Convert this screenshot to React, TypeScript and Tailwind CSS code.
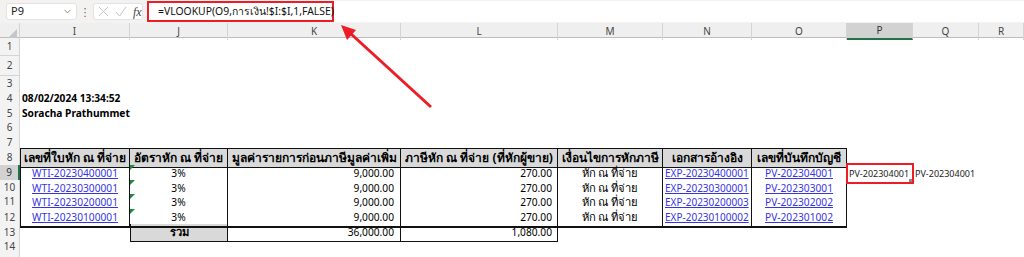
import { ChevronDown } from "lucide-react";

const GRID = "grid grid-cols-[20px_110px_98px_173px_157px_105px_89px_95px_66px_66px_1fr]";

const ROW_HEIGHTS: Record<number, string> = {
  1: "h-[18px]",
  2: "h-[20px]",
  3: "h-[15px]",
  4: "h-[15px]",
  5: "h-[14px]",
  6: "h-[15px]",
  7: "h-[13px]",
  8: "h-[17px]",
  9: "h-[15px]",
  10: "h-[14px]",
  11: "h-[15px]",
  12: "h-[15px]",
  13: "h-[15px]",
  14: "h-[15px]",
};

const rows = [
  { wti: "WTI-20230400001", exp: "EXP-20230400001", pv: "PV-202304001" },
  { wti: "WTI-20230300001", exp: "EXP-20230300001", pv: "PV-202303001" },
  { wti: "WTI-20230200001", exp: "EXP-20230200003", pv: "PV-202302002" },
  { wti: "WTI-20230100001", exp: "EXP-20230100002", pv: "PV-202301002" },
];

const headers = [
  "เลขที่ใบหัก ณ ที่จ่าย",
  "อัตราหัก ณ ที่จ่าย",
  "มูลค่ารายการก่อนภาษีมูลค่าเพิ่ม",
  "ภาษีหัก ณ ที่จ่าย (ที่หักผู้ขาย)",
  "เงื่อนไขการหักภาษี",
  "เอกสารอ้างอิง",
  "เลขที่บันทึกบัญชี",
];

function RowHead({ n, active }: { n?: number; active?: boolean }) {
  return (
    <div
      className={
        active
          ? "flex items-center justify-center border-b border-b-[#d4d4d4] border-r-2 border-r-[#217346] bg-[#d2d2d2] text-[10px] text-[#333]"
          : "flex items-center justify-center border-b border-r border-[#d4d4d4] bg-[#f3f3f3] text-[10px] text-[#444]"
      }
    >
      {n}
    </div>
  );
}

function Link({ children }: { children: string }) {
  return <span className="text-[#3535e6] underline decoration-[#3535e6] underline-offset-[1px]">{children}</span>;
}

function EmptyRow({ n }: { n: number }) {
  return (
    <div className={`${GRID} ${ROW_HEIGHTS[n]}`}>
      <RowHead n={n} />
    </div>
  );
}

export default function App() {
  const cols = ["I", "J", "K", "L", "M", "N", "O", "P", "Q", "R"];
  return (
    <div className="relative h-[257px] w-[1024px] overflow-hidden bg-white font-['Noto_Sans','DejaVu_Sans',sans-serif] text-black">
      {/* formula bar */}
      <div className="flex h-[23px] items-center bg-[#f3f2f1] pl-[6px]">
        <div className="flex h-[17px] w-[71px] items-center justify-between rounded-[3px] border border-[#e3e3e3] bg-white pl-[4px] pr-[3px] text-[11px] text-[#222]">
          P9
          <ChevronDown size={11} strokeWidth={1.5} className="text-[#555]" />
        </div>
        <div className="flex w-[16px] justify-center text-[11px] leading-none text-[#666]">⋮</div>
        <div className="flex h-[17px] w-[50px] items-center gap-[6px] rounded-[3px] border border-[#e3e3e3] bg-white pl-[4px] text-[#c2c2c2]">
          <svg width="11" height="11" viewBox="0 0 12 12" fill="none" stroke="currentColor" strokeWidth="1">
            <path d="M1 1l10 10M11 1L1 11" />
          </svg>
          <svg width="12" height="11" viewBox="0 0 12 11" fill="none" stroke="currentColor" strokeWidth="1">
            <path d="M1 6l3.5 4L11 1" />
          </svg>
          <span className="font-['Liberation_Serif',serif] text-[12px] italic leading-none text-[#444]">fx</span>
        </div>
        <div className="ml-[4px] flex h-[21px] flex-1 items-center bg-white">
          <div className="flex h-[21px] w-[187px] items-center whitespace-nowrap border-2 border-[#ee1c25] pl-[9px] text-[10.4px] text-[#111]">
            =VLOOKUP(O9,การเงิน!$I:$I,1,FALSE)
          </div>
        </div>
      </div>

      {/* column headers */}
      <div className={`${GRID} h-[15px] border-b border-[#bdbdbd] bg-[#efefef] text-[10px] text-[#444]`}>
        <div className="relative border-r border-[#d4d4d4]">
          <svg className="absolute bottom-[2px] right-[2px]" width="9" height="9" viewBox="0 0 9 9">
            <polygon points="9,0 9,9 0,9" fill="#c6c6c6" />
          </svg>
        </div>
        {cols.map((c) =>
          c === "P" ? (
            <div key={c} className="flex items-center justify-center border-b-2 border-r border-b-[#217346] border-r-[#d4d4d4] bg-[#d2d2d2] text-[#333]">
              {c}
            </div>
          ) : (
            <div key={c} className="flex items-center justify-center border-r border-[#d4d4d4]">
              {c}
            </div>
          )
        )}
      </div>

      <EmptyRow n={1} />
      <EmptyRow n={2} />
      <EmptyRow n={3} />
      <div className={`${GRID} ${ROW_HEIGHTS[4]}`}>
        <RowHead n={4} />
        <div className="flex items-center whitespace-nowrap pl-[2px] text-[10.2px] font-bold">08/02/2024 13:34:52</div>
      </div>
      <div className={`${GRID} ${ROW_HEIGHTS[5]}`}>
        <RowHead n={5} />
        <div className="flex items-center whitespace-nowrap pl-[2px] text-[10.2px] font-bold">Soracha Prathummet</div>
      </div>
      <EmptyRow n={6} />
      <EmptyRow n={7} />

      {/* table header */}
      <div className={`${GRID} ${ROW_HEIGHTS[8]} text-[12px]`}>
        <RowHead n={8} />
        {headers.map((h, i) => (
          <div
            key={h}
            className={`flex items-center justify-center whitespace-nowrap border-y border-r border-[#111] bg-[#d9d9d9] font-bold ${i === 0 ? "border-l" : ""}`}
          >
            {h}
          </div>
        ))}
      </div>

      {/* data */}
      {rows.map((r, i) => {
        const n = 9 + i;
        const last = i === rows.length - 1;
        const bottom = last ? "border-b-2 border-b-[#111]" : "";
        return (
          <div key={r.wti} className={`${GRID} ${ROW_HEIGHTS[n]} text-[10.2px]`}>
            <RowHead n={n} active={n === 9} />
            <div className={`flex items-center justify-center whitespace-nowrap border-x border-[#111] ${bottom}`}>
              <Link>{r.wti}</Link>
            </div>
            <div className={`relative flex items-center justify-center border-r border-[#111] ${bottom}`}>
              <svg className="absolute left-0 top-0" width="5" height="5" viewBox="0 0 5 5">
                <polygon points="0,0 5,0 0,5" fill="#1f8a3c" />
              </svg>
              3%
            </div>
            <div className={`flex items-center justify-end border-r border-[#111] pr-[6px] ${bottom}`}>9,000.00</div>
            <div className={`flex items-center justify-end border-r border-[#111] pr-[5px] ${bottom}`}>270.00</div>
            <div className={`flex items-center justify-center whitespace-nowrap border-r border-[#111] text-[11.2px] ${bottom}`}>หัก ณ ที่จ่าย</div>
            <div className={`flex items-center whitespace-nowrap border-r border-[#111] pl-[2px] text-[10px] ${bottom}`}>
              <Link>{r.exp}</Link>
            </div>
            <div className={`flex items-center justify-center whitespace-nowrap border-r border-[#111] ${bottom}`}>
              <Link>{r.pv}</Link>
            </div>
            {n === 9 ? (
              <>
                <div className="relative flex items-center whitespace-nowrap pl-[2px] text-[9px] text-[#222]">
                  PV-202304001
                  <div className="absolute -bottom-[2px] -left-[1px] -right-[1px] -top-[2px] border-2 border-[#ee1c25]" />
                  <div className="absolute bottom-[0px] right-[1px] h-[3px] w-[3px] bg-[#8a8a8a]" />
                </div>
                <div className="flex items-center whitespace-nowrap pl-[2px] text-[9px] text-[#222]">PV-202304001</div>
              </>
            ) : null}
          </div>
        );
      })}

      {/* totals */}
      <div className={`${GRID} ${ROW_HEIGHTS[13]} text-[10.2px]`}>
        <RowHead n={13} />
        <div />
        <div className="flex items-center justify-center border-x border-b border-[#111] bg-[#d9d9d9] text-[11.2px] font-bold">รวม</div>
        <div className="flex items-center justify-end border-b border-r border-[#111] pr-[6px]">36,000.00</div>
        <div className="flex items-center justify-end border-b border-r border-[#111] pr-[5px]">1,080.00</div>
      </div>
      <EmptyRow n={14} />
      <div className={`${GRID} h-[15px]`}>
        <RowHead />
      </div>

      {/* annotation arrow */}
      <svg className="pointer-events-none absolute left-0 top-0" width="1024" height="257" viewBox="0 0 1024 257">
        <line x1="431" y1="107" x2="350" y2="33" stroke="#ee1c25" strokeWidth="3" />
        <polygon points="341,25 356,30 347,40" fill="#ee1c25" />
      </svg>
    </div>
  );
}
